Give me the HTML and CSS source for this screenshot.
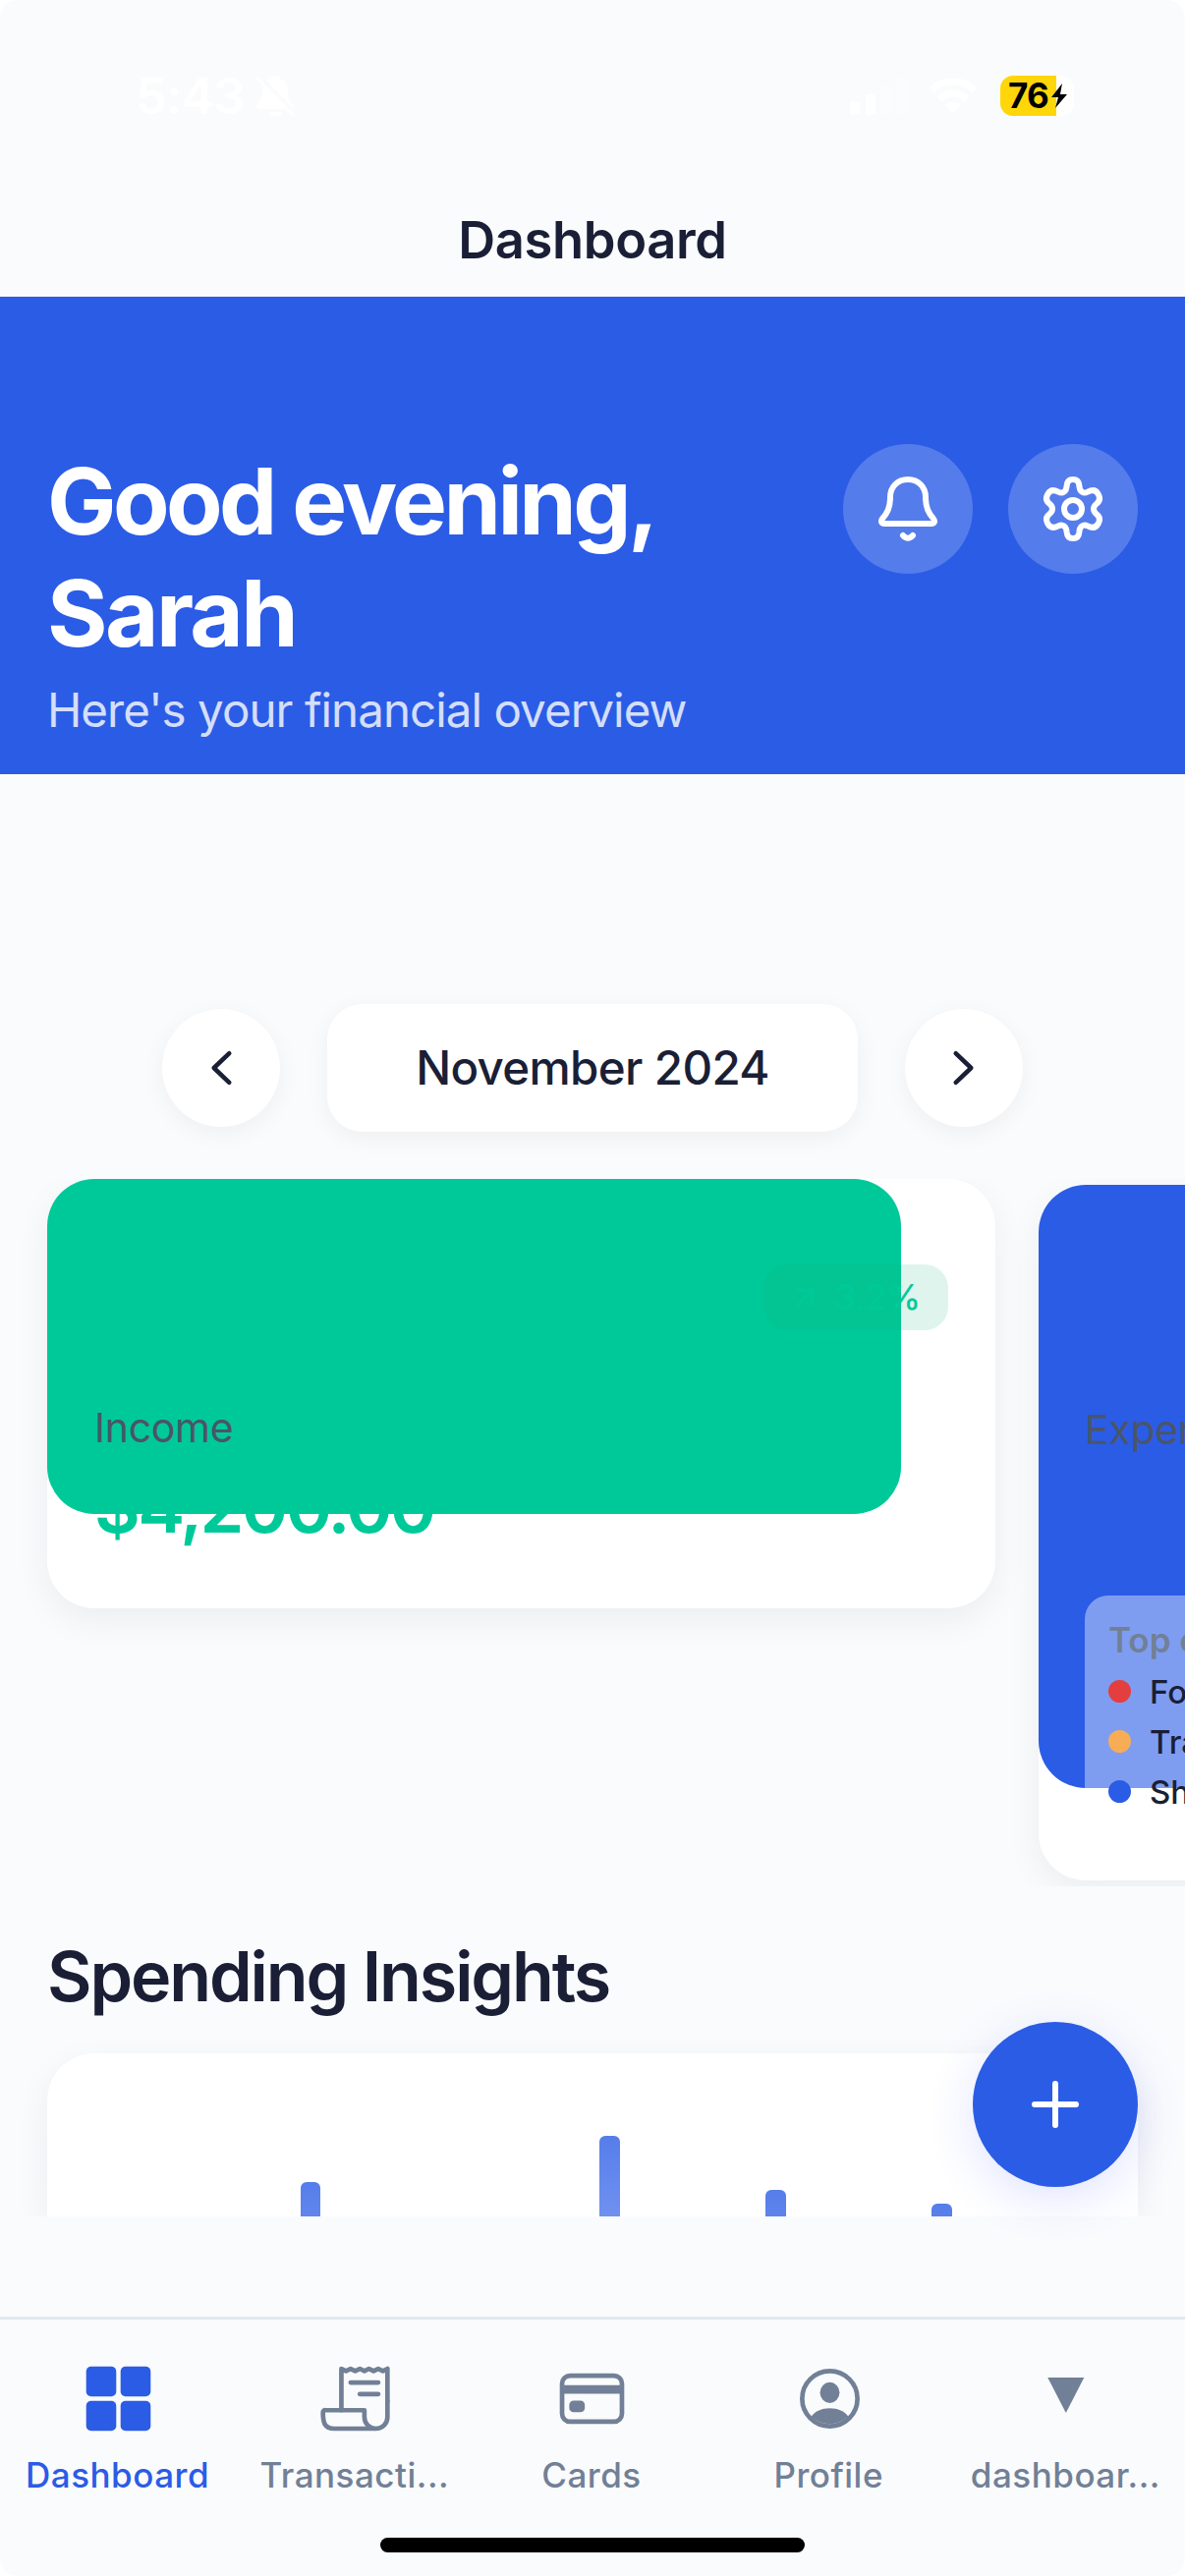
FILE: index.html
```html
<!DOCTYPE html>
<html lang="en">
<head>
<meta charset="utf-8">
<title>Dashboard</title>
<link rel="stylesheet" href="styles.css">
</head>
<body>
<div class="screen">
  <div class="status">
    <div class="status-left">
      <span class="time">5:43</span>
      <svg class="silent" viewBox="0 0 40 42"><path d="M20 0c-2 0-4 1-5 3-5 2-8 7-8 14 0 8-4 10-6 14 0 2 1 3 2 3h34c1 0 2-1 2-3-2-4-6-6-6-14 0-7-3-12-8-14-1-2-3-3-5-3zM13 37h14c-1 6-13 6-14 0z" fill="#fff"/><path d="M4 1l35 37" stroke="#fafbfd" stroke-width="5"/><path d="M2 3l36 37" stroke="#fff" stroke-width="3" stroke-linecap="round"/></svg>
    </div>
    <div class="status-right">
      <svg class="signal" viewBox="0 0 58 40" fill="#fff"><rect x="0" y="25" width="10" height="14" rx="3"/><rect x="16" y="18" width="10" height="21" rx="3"/><rect x="32" y="10" width="10" height="29" rx="3" opacity=".4"/><rect x="48" y="1" width="10" height="38" rx="3" opacity=".4"/></svg>
      <svg class="wifi" viewBox="0 0 50 37" fill="none" stroke="#fff" stroke-width="7"><path d="M3 13a31 31 0 0 1 44 0M11 22a20 20 0 0 1 28 0"/><path d="M17 28a12 12 0 0 1 16 0l-8 8z" fill="#fff" stroke="none"/></svg>
      <div class="battery"><span>76</span><svg viewBox="0 0 16 25"><path d="M11 0L0 14h7L4 25l12-14H9z"/></svg></div>
    </div>
  </div>
  <header class="navbar">Dashboard</header>
  <main class="content">
    <section class="hero">
      <div class="hero-text">
        <h1><span class="greeting">Good evening,</span><br>Sarah</h1>
        <p>Here's your financial overview</p>
      </div>
      <div class="hero-actions">
        <div class="round-btn"><svg viewBox="0 0 66 66"><path d="M33 3C22 3 15 11 15 21C15 32 12 37 7 43C5 45.500 6 48 9 48H57C60 48 61 45.500 59 43C54 37 51 32 51 21C51 11 44 3 33 3z"/><path d="M28 60Q33 65.500 38 60"/></svg></div>
        <div class="round-btn"><svg viewBox="0 0 66 66"><path d="M33 3C28.500 3 27 5.500 26.700 9C26.300 15.500 22.500 18 18 15.700C13 13 9.500 14 7.300 18C5 22 6 25.300 9 27.700C13 31 13 35 9 38.300C6 40.700 5 44 7.300 48C9.500 52 13 53 18 50.300C22.500 48 26.300 50.500 26.700 57C27 60.500 28.500 63 33 63C37.500 63 39 60.500 39.300 57C39.700 50.500 43.500 48 48 50.300C53 53 56.500 52 58.700 48C61 44 60 40.700 57 38.300C53 35 53 31 57 27.700C60 25.300 61 22 58.700 18C56.500 14 53 13 48 15.700C43.500 18 39.700 15.500 39.300 9C39 5.500 37.500 3 33 3z"/><circle cx="33" cy="33" r="9"/></svg></div>
      </div>
    </section>
    <div class="month">
      <div class="month-btn"><svg viewBox="0 0 48 48"><path d="M32.300 9.200L16.700 24l15.600 14.800"/></svg></div>
      <div class="month-name">November 2024</div>
      <div class="month-btn"><svg viewBox="0 0 48 48"><path d="M15.700 9.200L31.300 24l-15.600 14.800"/></svg></div>
    </div>
    <section class="cards">
      <article class="card income">
        <div class="fill"></div>
        <div class="badge"><svg viewBox="0 0 20 20"><path d="M2 18L18 2M3 2h15v15"/></svg><span>3.2%</span></div>
        <div class="label">Income</div>
        <div class="amount">$4,200.00</div>
      </article>
      <article class="card expenses">
        <div class="fill"></div>
        <div class="label">Expenses</div>
        <div class="top">
          <div class="top-title">Top categories</div>
          <div class="top-row"><i class="dot red"></i>Food</div>
          <div class="top-row"><i class="dot orange"></i>Transport</div>
          <div class="top-row"><i class="dot blue"></i>Shopping</div>
        </div>
      </article>
    </section>
    <h2>Spending Insights</h2>
    <section class="chart">
      <i class="bar" style="height:35px"></i>
      <i class="bar" style="height:82px"></i>
      <i class="bar" style="height:27px"></i>
      <i class="bar" style="height:13px"></i>
    </section>
  </main>
  <div class="fab"><svg viewBox="0 0 48 48"><path d="M24 3v42M3 24h42"/></svg></div>
  <nav class="tabs">
    <div class="tab active"><svg viewBox="0 0 75 75" fill="currentColor"><rect x="4.700" y="4.700" width="30.600" height="30.600" rx="5"/><rect x="39.700" y="4.700" width="30.600" height="30.600" rx="5"/><rect x="4.700" y="39.700" width="30.600" height="30.600" rx="5"/><rect x="39.700" y="39.700" width="30.600" height="30.600" rx="5"/></svg><span>Dashboard</span></div>
    <div class="tab"><svg viewBox="0 0 512 512" class="line"><path d="M160 336V48l32 16 32-16 31.940 16 32.370-16L320 64l31.790-16 31.930 16L416 48l32.010 16L480 48v224"/><path d="M480 272v112a80 80 0 0 1-80 80 80 80 0 0 1-80-80v-48H48a15.860 15.860 0 0 0-16 16c0 64 6.740 112 80 112h288"/><path d="M224 144h192M288 224h128"/></svg><span>Transacti...</span></div>
    <div class="tab"><svg viewBox="0 0 512 512" class="line"><rect x="48" y="96" width="416" height="320" rx="56"/><path d="M48 192h416M128 300h48v20h-48z" stroke-width="60" stroke-linecap="butt"/></svg><span>Cards</span></div>
    <div class="tab"><svg viewBox="0 0 512 512"><circle cx="256" cy="256" r="192" fill="none" stroke="currentColor" stroke-width="32"/><ellipse cx="256" cy="214" rx="68" ry="72" fill="currentColor"/><path d="M127 380c28-38 72-58 129-58s101 20 129 58a188 188 0 0 1-258 0z" fill="currentColor"/></svg><span>Profile</span></div>
    <div class="tab"><svg viewBox="0 0 75 75" fill="currentColor"><path d="M18.300 16h37L36.800 52z"/></svg><span>dashboar...</span></div>
  </nav>
  <div class="home"></div>
</div>
</body>
</html>
```
FILE: styles.css
```css
* { box-sizing: border-box; margin: 0; padding: 0; }
body { background: #fff; font-family: Inter, "Liberation Sans", sans-serif; color: #1a1f36; }
svg { display: block; flex: none; overflow: visible; }
.screen { position: relative; width: 1206px; height: 2622px; overflow: hidden; background: #fafbfd; border-radius: 18px; display: flex; flex-direction: column; }

.status { height: 186px; padding: 60px 113px 0 138px; display: flex; justify-content: space-between; }
.status-left, .status-right { height: 75px; display: flex; align-items: center; }
.status-left { gap: 11px; }
.time { color: #fff; font-size: 51px; font-weight: 600; line-height: 75px; letter-spacing: -1px; }
.silent { width: 40px; height: 42px; }
.signal { width: 58px; height: 40px; margin-right: 22px; }
.wifi { width: 50px; height: 37px; margin-right: 23px; }
.battery { width: 75px; height: 41px; border-radius: 13px; background: linear-gradient(90deg, #ffd60a 57px, #fff 57px); display: flex; align-items: center; padding-left: 8px; color: #000; }
.battery span { font-size: 35px; font-weight: 700; letter-spacing: -.8px; width: 44px; line-height: 41px; }
.battery svg { width: 16px; height: 25px; }

.navbar { height: 116px; line-height: 116px; text-align: center; font-size: 52.500px; font-weight: 600; letter-spacing: -.4px; }

.content { height: 1954px; overflow: hidden; flex: none; }
.hero { height: 486px; background: #2b5ce6; padding: 150px 48px 0; display: flex; justify-content: space-between; color: #fff; }
.hero-text { padding-top: 1px; }
h1 { font-size: 94px; line-height: 114px; font-weight: 700; letter-spacing: -2.600px; }
.greeting { letter-spacing: -3.600px; }
.hero p { margin-top: 13px; font-size: 47.500px; line-height: 58px; letter-spacing: -.950px; opacity: .8; white-space: nowrap; }
.hero-actions { display: flex; gap: 36px; }
.round-btn { width: 132px; height: 132px; border-radius: 50%; background: rgba(255,255,255,.2); display: grid; place-items: center; }
.round-btn svg { width: 66px; height: 66px; fill: none; stroke: #fff; stroke-width: 6; stroke-linecap: round; stroke-linejoin: round; }

.month { margin-top: 234px; height: 130px; display: flex; justify-content: center; align-items: center; gap: 48px; }
.month-btn { width: 120px; height: 120px; border-radius: 50%; background: #fff; display: grid; place-items: center; box-shadow: 0 6px 24px rgba(0,0,0,.05); }
.month-btn svg { width: 48px; height: 48px; fill: none; stroke: #1a1f36; stroke-width: 4.500; stroke-linecap: round; stroke-linejoin: round; }
.month-name { width: 540px; height: 130px; border-radius: 36px; background: #fff; text-align: center; font-size: 47.500px; font-weight: 500; line-height: 130px; letter-spacing: -.650px; box-shadow: 0 6px 24px rgba(0,0,0,.05); }

.cards { margin-top: 48px; height: 720px; overflow: hidden; display: flex; align-items: flex-start; gap: 44px; padding-left: 48px; }
.card { position: relative; flex: none; width: 965px; background: #fff; border-radius: 48px; box-shadow: 0 12px 36px rgba(0,0,0,.06); display: flex; flex-direction: column; align-items: flex-start; }
.fill { position: absolute; z-index: 1; left: 0; top: 0; border-radius: 48px; }
.badge, .label, .top { position: relative; z-index: 2; }
.label { color: #4a5568; font-size: 41px; line-height: 50px; letter-spacing: -.300px; }
.income { height: 437px; padding: 87px 48px 0; }
.income .fill { width: 869px; height: 341px; background: #00c999; }
.badge { align-self: flex-end; width: 188px; height: 67px; border-radius: 24px; background: rgba(15,173,113,.133); color: #00c999; display: flex; align-items: center; padding-left: 32px; gap: 21px; font-size: 35px; font-weight: 500; line-height: 67px; }
.badge svg { width: 20px; height: 20px; fill: none; stroke: #00c999; stroke-width: 3; stroke-linecap: round; }
.badge span { margin-left: -1px; }
.income .label { margin-top: 74px; }
.amount { margin-top: 12px; font-size: 72px; line-height: 88px; font-weight: 600; color: #00c999; letter-spacing: -2.600px; }
.expenses { margin-top: 6px; height: 708px; padding: 224px 47px 0; }
.expenses .fill { width: 869px; height: 614px; background: #2b5ce6; }
.top { margin-top: 144px; width: 869px; height: 232px; border-radius: 24px; background: rgba(255,255,255,.4); padding: 24px; }
.top-title { font-size: 35px; font-weight: 600; line-height: 42px; margin-bottom: 6px; color: #718096; }
.top-row { height: 51px; display: flex; align-items: center; gap: 19px; font-size: 33px; font-weight: 500; }
.dot { width: 23px; height: 23px; border-radius: 50%; }
.red { background: #e53e3e; }
.orange { background: #f6ad55; }
.blue { background: #2b5ce6; }

h2 { margin-top: 50px; padding-left: 48px; font-size: 70px; line-height: 84px; font-weight: 600; letter-spacing: -2.100px; }
.chart { margin: 36px 48px 0; height: 166px; border-radius: 48px 48px 0 0; background: #fff; box-shadow: 0 12px 36px rgba(0,0,0,.06); display: grid; grid-template-columns: 304.500px 169px 169px 21px; align-items: end; padding-left: 257.500px; }
.bar { width: 20.500px; border-radius: 6px 6px 0 0; background: linear-gradient(#567dea, #7091f0 82px); }

.fab { position: absolute; left: 990px; top: 2058px; width: 168px; height: 168px; border-radius: 50%; background: #2b5ce6; display: grid; place-items: center; box-shadow: 0 12px 48px rgba(60,90,255,.16); }
.fab svg { width: 48px; height: 48px; stroke: #fff; stroke-width: 6; stroke-linecap: round; }

.tabs { margin-top: 102px; height: 220px; border-top: 3px solid #e2e8f0; display: grid; grid-template-columns: repeat(5, 1fr); padding-top: 43px; color: #718096; }
.tab { display: flex; flex-direction: column; align-items: center; gap: 19px; }
.tab svg { width: 75px; height: 75px; }
.tab span { font-size: 35px; line-height: 42px; font-weight: 500; letter-spacing: .500px; margin-left: -2px; }
.tab.active { color: #2b5ce6; }
.line { fill: none; stroke: currentColor; stroke-width: 32; stroke-linecap: round; stroke-linejoin: round; }
.home { width: 432px; height: 15px; margin: 5px auto 0; border-radius: 8px; background: #000; }
```
